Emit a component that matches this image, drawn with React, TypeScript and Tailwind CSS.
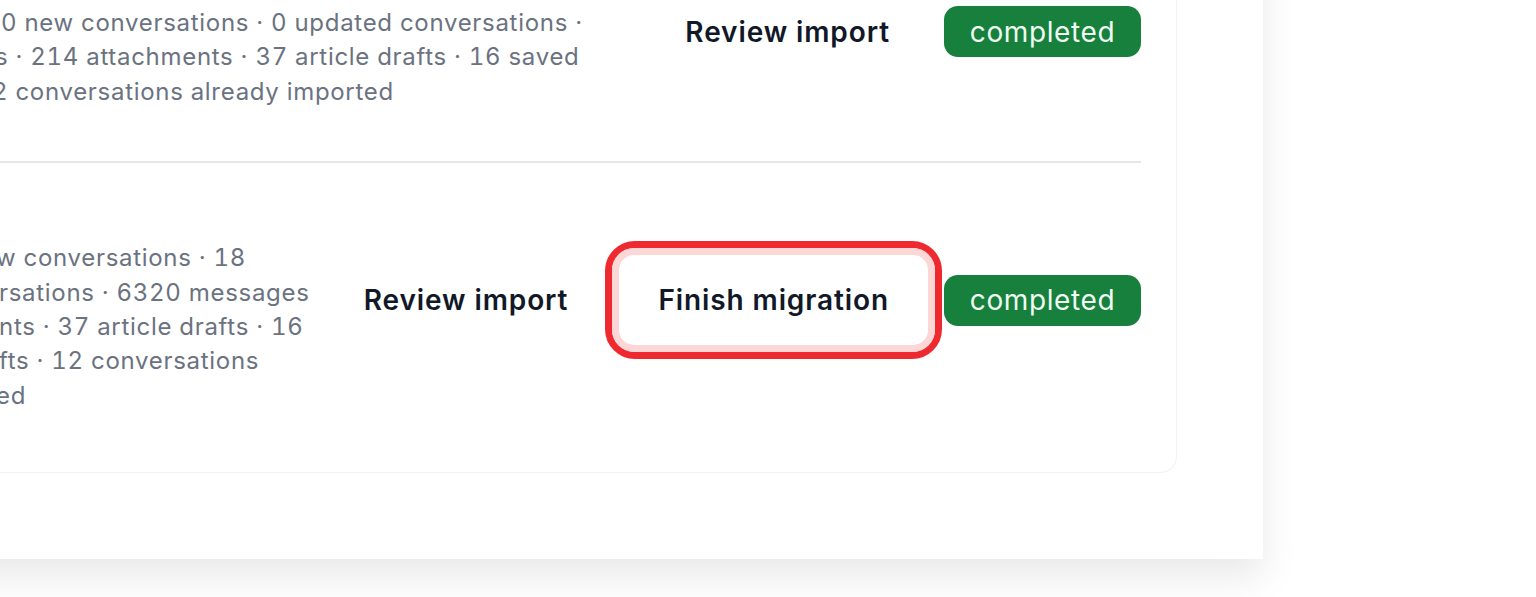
type Line = { text: string; shift: string };

type ImportRow = {
  title: string;
  lines: Line[];
  finish: boolean;
  bottom: string;
};

const rows: ImportRow[] = [
  {
    title: 'Intercom · 12 Mar',
    lines: [
      { text: '0 new conversations · 0 updated conversations ·', shift: 'ml-[1px]' },
      { text: 's · 214 attachments · 37 article drafts · 16 saved', shift: '-ml-[5px]' },
      { text: '2 conversations already imported', shift: '-ml-[8px]' },
    ],
    finish: false,
    bottom: 'pb-[52px] border-b-2 border-[#e5e7eb]',
  },
  {
    title: 'Intercom · 14 Mar',
    lines: [
      { text: 'w conversations · 18', shift: '-ml-[4px]' },
      { text: 'rsations · 6320 messages', shift: '-ml-[1px]' },
      { text: 'nts · 37 article drafts · 16', shift: '-ml-[1px]' },
      { text: 'fts · 12 conversations', shift: '-ml-[1px]' },
      { text: 'ed', shift: '-ml-[4px]' },
    ],
    finish: true,
    bottom: 'pb-[59px]',
  },
];

function StatusBadge() {
  return (
    <span className="flex h-[51px] w-[197px] items-center justify-center rounded-[14px] bg-[#16803c] text-[28px] font-normal tracking-[0.6px] text-[#eefbf2]">
      completed
    </span>
  );
}

function FinishButton() {
  return (
    <div className="mr-[2px] rounded-[30px] border-[7px] border-[#ee2a30]">
      <button className="rounded-[22px] border-[7px] border-[#fdd6d6] bg-white px-[39px] py-[28px] text-[28px] font-semibold leading-[34px] tracking-[0.9px] text-[#111827]">
        Finish migration
      </button>
    </div>
  );
}

function Row({ row }: { row: ImportRow }) {
  return (
    <div className={`flex items-start pt-[78px] ${row.bottom}`}>
      <div className="w-[313px] shrink-0 truncate text-[26px] font-semibold text-[#111827]">{row.title}</div>
      <div className="min-w-0 flex-1 text-[24px] leading-[34.4px] tracking-[0.7px] tabular-nums text-[#6b7280]">
        {row.lines.map((l, i) => (
          <div key={i} className={`whitespace-nowrap ${l.shift}`}>
            {l.text}
          </div>
        ))}
      </div>
      <div className="flex items-center">
        <button
          className={`text-[28px] font-semibold leading-[34px] tracking-[0.9px] text-[#111827] ${row.finish ? 'mr-[37px]' : 'mr-[54px]'}`}
        >
          Review import
        </button>
        {row.finish && <FinishButton />}
        <StatusBadge />
      </div>
    </div>
  );
}

export default function App() {
  return (
    <div className="h-[597px] w-[1536px] overflow-hidden bg-white" style={{ fontFamily: 'Inter, "Noto Sans", sans-serif' }}>
      <div className="-ml-[400px] -mt-[159px] w-[1663px] bg-white px-[86px] pb-[86px] pt-[86px] shadow-[0_18px_36px_rgba(0,0,0,0.09)]">
        <div className="rounded-[16px] border border-[#f1f2f4] pr-[35px]">
          {rows.map((r, i) => (
            <Row key={i} row={r} />
          ))}
        </div>
      </div>
    </div>
  );
}
